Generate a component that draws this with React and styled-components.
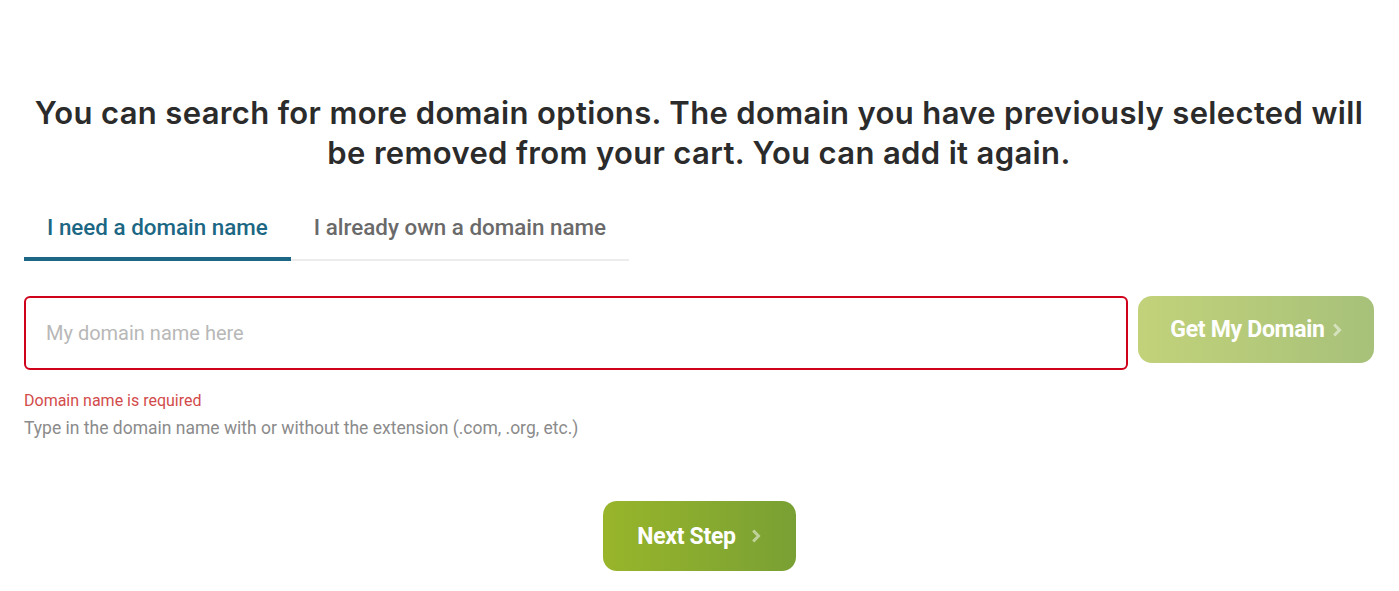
import React from "react";
import styled, { createGlobalStyle } from "styled-components";

const Global = createGlobalStyle`
  html, body { margin: 0; padding: 0; background: #fff; }
  body { font-family: Roboto, "Liberation Sans", sans-serif; }
  * { box-sizing: border-box; }
`;

const Page = styled.div`
  padding: 93px 25px 0 24px;
  display: flex;
  flex-direction: column;
`;

const Heading = styled.h1`
  margin: 0;
  text-align: center;
  font-family: Inter, "Open Sans", sans-serif;
  font-weight: 600;
  font-size: 31px;
  line-height: 40px;
  color: #2b2b2b;
  letter-spacing: 0.35px;
`;

const Tabs = styled.div`
  display: flex;
  align-self: flex-start;
  margin-top: 29px;
  border-bottom: 2px solid #ececec;
`;

const Tab = styled.button`
  border: 0;
  background: none;
  padding: 12px 23px 17px;
  margin-bottom: -2px;
  font-family: Roboto, sans-serif;
  font-weight: 500;
  font-size: 22.4px;
  line-height: 26px;
  cursor: pointer;
  color: ${(p) => (p.$active ? "#1c6783" : "#6a6a6a")};
  border-bottom: 4px solid ${(p) => (p.$active ? "#1c6783" : "transparent")};
`;

const Row = styled.div`
  display: flex;
  gap: 10px;
  margin-top: 35px;
  align-items: flex-start;
`;

const Input = styled.input`
  flex: 1;
  height: 74px;
  border: 2px solid #d0021b;
  border-radius: 6px;
  padding: 0 20px;
  font-family: Roboto, sans-serif;
  font-size: 20px;
  color: #333;
  outline: none;
  &::placeholder { color: #b8b8b8; }
`;

const Button = styled.button`
  border: 0;
  display: flex;
  align-items: center;
  justify-content: center;
  gap: ${(p) => (p.$wide ? "15px" : "7px")};
  font-family: Roboto, sans-serif;
  font-weight: 700;
  font-size: 23px;
  color: #fff;
  cursor: pointer;
  border-radius: 14px;
  letter-spacing: -0.3px;
`;

const SearchButton = styled(Button)`
  width: 236px;
  height: 67px;
  background: linear-gradient(90deg, #c2d27a 0%, #a7c17a 100%);
`;

const NextButton = styled(Button)`
  align-self: center;
  width: 193px;
  height: 70px;
  margin-top: 63px;
  background: linear-gradient(90deg, #98b52a 0%, #79a034 100%);
`;

const Chevron = styled.svg`
  width: 10px;
  height: 14px;
  opacity: 0.5;
`;

const Error = styled.div`
  margin-top: 21px;
  font-size: 16px;
  color: #d24b4b;
  line-height: 20px;
`;

const Help = styled.div`
  margin-top: 7px;
  font-size: 17.5px;
  color: #8b8b8b;
  line-height: 20px;
`;

const Arrow = () => (
  <Chevron viewBox="0 0 10 14" fill="none">
    <path d="M2.2 1.5 L7.5 7 L2.2 12.5" stroke="#fff" strokeWidth="3" />
  </Chevron>
);

export default function App() {
  return (
    <>
      <Global />
      <Page>
        <Heading>
          You can search for more domain options. The domain you have previously selected will
          <br />
          be removed from your cart. You can add it again.
        </Heading>
        <Tabs>
          <Tab $active>I need a domain name</Tab>
          <Tab>I already own a domain name</Tab>
        </Tabs>
        <Row>
          <Input placeholder="My domain name here" />
          <SearchButton>
            Get My Domain <Arrow />
          </SearchButton>
        </Row>
        <Error>Domain name is required</Error>
        <Help>Type in the domain name with or without the extension (.com, .org, etc.)</Help>
        <NextButton $wide>
          Next Step <Arrow />
        </NextButton>
      </Page>
    </>
  );
}
